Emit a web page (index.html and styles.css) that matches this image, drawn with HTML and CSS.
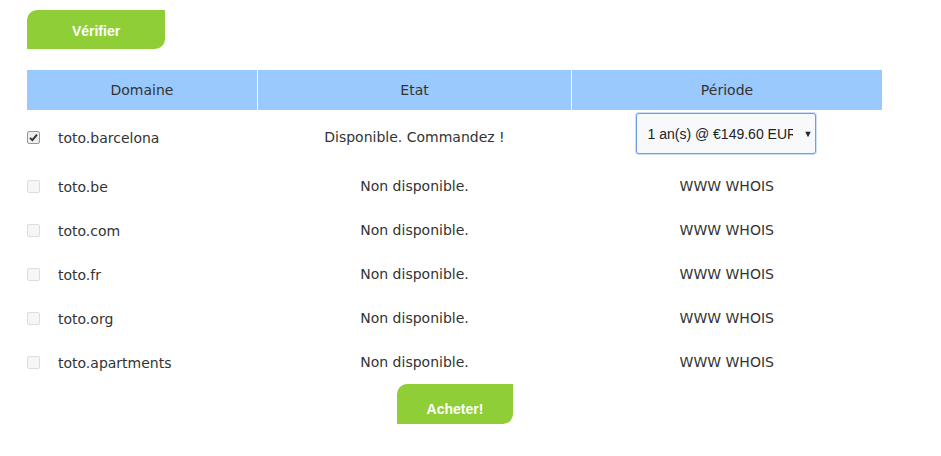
FILE: index.html
```html
<!DOCTYPE html>
<html lang="fr">
<head>
<meta charset="utf-8">
<link rel="stylesheet" href="styles.css">
</head>
<body>
<div class="page">
  <button class="btn btn-verify" type="button">Vérifier</button>
  <table class="domains">
    <thead>
      <tr><th class="c-dom">Domaine</th><th class="c-etat">Etat</th><th class="c-per">Période</th></tr>
    </thead>
    <tbody>
      <tr class="first">
        <td class="dom"><span class="cb checked"><svg viewBox="0 0 13 13" width="13" height="13"><path d="M3 6.8 L5.4 9.2 L10 3.6" fill="none" stroke="#333" stroke-width="1.9"/></svg></span><span class="name">toto.barcelona</span></td>
        <td class="etat">Disponible. Commandez !</td>
        <td class="per"><div class="select"><span class="sel-text">1 an(s) @ €149.60 EUR</span><span class="arrow">▼</span></div></td>
      </tr>
      <tr><td class="dom"><span class="cb"></span><span class="name">toto.be</span></td><td class="etat">Non disponible.</td><td class="per">WWW WHOIS</td></tr>
      <tr><td class="dom"><span class="cb"></span><span class="name">toto.com</span></td><td class="etat">Non disponible.</td><td class="per">WWW WHOIS</td></tr>
      <tr><td class="dom"><span class="cb"></span><span class="name">toto.fr</span></td><td class="etat">Non disponible.</td><td class="per">WWW WHOIS</td></tr>
      <tr><td class="dom"><span class="cb"></span><span class="name">toto.org</span></td><td class="etat">Non disponible.</td><td class="per">WWW WHOIS</td></tr>
      <tr><td class="dom"><span class="cb"></span><span class="name">toto.apartments</span></td><td class="etat">Non disponible.</td><td class="per">WWW WHOIS</td></tr>
    </tbody>
  </table>
  <div class="buy-row"><button class="btn btn-buy" type="button">Acheter!</button></div>
</div>
</body>
</html>
```
FILE: styles.css
```css
html, body { margin: 0; padding: 0; background: #fff; }
body { font-family: "DejaVu Sans", sans-serif; color: #333; }
.page { padding: 10px 0 0 27px; width: 855px; }
.btn {
  display: block;
  border: 0;
  background: #8fce36;
  color: #fff;
  font-family: "Liberation Sans", Arial, sans-serif;
  font-weight: bold;
  font-size: 14px;
  border-radius: 10px 0 10px 0;
  padding: 0;
  cursor: pointer;
}
.btn-verify { width: 138px; height: 39px; padding-top: 2px; }
.domains {
  margin-top: 21px;
  width: 855px;
  border-collapse: collapse;
  table-layout: fixed;
  font-size: 14px;
}
.domains th {
  background: #99c9fd;
  height: 40px;
  padding: 0;
  font-weight: normal;
  color: #333;
  border-left: 1px solid #fff;
}
.domains th:first-child { border-left: 0; }
.c-dom { width: 230px; }
.c-etat { width: 313px; }
.domains td { height: 44px; padding: 0; vertical-align: middle; }
.domains tr.first td { height: 54px; }
.dom { white-space: nowrap; }
.dom .cb {
  display: inline-block;
  width: 11px; height: 11px;
  border: 1px solid #ddd;
  border-radius: 2px;
  background: #f6f6f6;
  vertical-align: middle;
  margin-right: 18px;
  position: relative;
}
.dom .cb.checked { border-color: #999; background: #eee; }
.dom .cb svg { position: absolute; left: -1px; top: -1px; }
.name { vertical-align: middle; }
.etat, .per { text-align: center; }
.select {
  display: flex;
  align-items: center;
  margin: 0 0 7px 64px;
  width: 178px;
  height: 39px;
  border: 1px solid #6a9fe8;
  border-radius: 3px;
  background: #f8f9fb;
  box-shadow: 0 0 0 1px rgba(106,159,232,0.35);
  overflow: hidden;
  font-family: "Liberation Sans", Arial, sans-serif;
  font-size: 14px;
  color: #222;
}
.sel-text { width: 145px; overflow: hidden; white-space: nowrap; text-align: left; padding-left: 11px; flex: none; }
.arrow { font-size: 9px; margin-left: 11px; }
.buy-row { display: flex; padding-left: 370px; margin-top: 0; }
.btn-buy { width: 116px; height: 40px; padding-top: 9px; }
```
